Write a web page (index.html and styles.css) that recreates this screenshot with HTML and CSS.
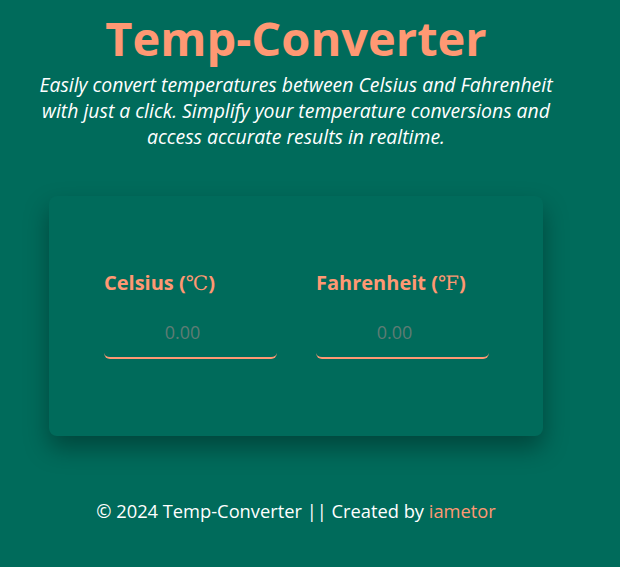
FILE: index.html
```html
<!DOCTYPE html>
<html lang="en">
<head>
<meta charset="utf-8">
<title>Temp-Converter</title>
<link rel="stylesheet" href="styles.css">
</head>
<body>
<div class="page">
  <header class="hero">
    <h1 class="title">Temp-Converter</h1>
    <p class="subtitle">Easily convert temperatures between Celsius and Fahrenheit with just a click. Simplify your temperature conversions and access accurate results in realtime.</p>
  </header>
  <main class="card">
    <div class="field">
      <label class="label" for="c">Celsius (<span class="unit">℃</span>)</label>
      <input class="input" id="c" type="text" placeholder="0.00">
    </div>
    <div class="field">
      <label class="label" for="f">Fahrenheit (<span class="unit">℉</span>)</label>
      <input class="input" id="f" type="text" placeholder="0.00">
    </div>
  </main>
  <footer class="footer">© 2024 Temp-Converter || Created by <a class="link" href="#">iametor</a></footer>
</div>
</body>
</html>
```

FILE: styles.css
```css
html, body {
  margin: 0;
  padding: 0;
  background: #006b5b;
  height: 100%;
}
body {
  font-family: "Open Sans", "Noto Sans", sans-serif;
  color: #ffffff;
}
.page {
  width: 592px;
  display: flex;
  flex-direction: column;
  align-items: center;
}
.hero {
  text-align: center;
  padding-top: 10px;
}
.title {
  margin: 0;
  font-size: 47px;
  font-weight: 700;
  color: #ff9873;
  line-height: 56px;
  letter-spacing: 0;
}
.subtitle {
  margin: 6px auto 0;
  width: 540px;
  font-style: italic;
  font-size: 19.4px;
  line-height: 26px;
  letter-spacing: 0;
}
.card {
  margin-top: 46px;
  width: 494px;
  height: 240px;
  box-sizing: border-box;
  background: #006b5b;
  border-radius: 8px;
  box-shadow: 0 12px 24px rgba(0, 0, 0, 0.34);
  display: flex;
  gap: 39px;
  padding: 75px 55px 0;
}
.field {
  display: flex;
  flex-direction: column;
  gap: 20px;
}
.label {
  font-size: 20px;
  font-weight: 700;
  color: #ff9873;
  line-height: 24px;
  letter-spacing: 0;
  white-space: nowrap;
}
.unit {
  font-family: "DejaVu Serif", "Liberation Serif", serif;
  font-weight: 400;
  font-size: 20px;
}
.input {
  width: 173px;
  box-sizing: border-box;
  height: 44px;
  background: transparent;
  border: none;
  border-bottom: 2px solid #ff9873;
  border-radius: 0 0 6px 6px;
  outline: none;
  text-align: center;
  font-family: "Open Sans", sans-serif;
  font-size: 18px;
  color: #ffffff;
  padding: 0 16px 8px 0;
}
.input::placeholder {
  color: #5e7c74;
}
.footer {
  margin-top: 63px;
  font-size: 18.3px;
  line-height: 24px;
  letter-spacing: 0;
}
.link {
  color: #ff9873;
  text-decoration: none;
}
```
